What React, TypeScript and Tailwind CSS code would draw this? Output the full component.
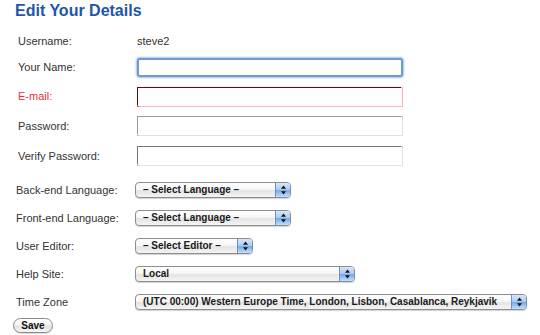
import React from "react";

function Arrows() {
  return (
    <svg width="7" height="10" viewBox="0 0 7 10">
      <path d="M3.5 0.5 L6 3.8 L1 3.8 Z" fill="#111" />
      <path d="M3.5 9.5 L6 6.2 L1 6.2 Z" fill="#111" />
    </svg>
  );
}

function AquaSelect({ text, className }: { text: string; className: string }) {
  return (
    <div
      className={
        "flex h-[16px] items-stretch rounded-[4px] border border-[#8d8d8d] bg-[linear-gradient(#ffffff,#f6f6f6_45%,#e4e4e4_55%,#f4f4f4)] shadow-[0_1px_1px_rgba(0,0,0,0.18)] " +
        className
      }
    >
      <div className="flex-1 overflow-hidden whitespace-nowrap pl-[7px] text-[10px] font-bold leading-[14px] text-[#1a1a1a]">
        {text}
      </div>
      <div className="flex w-[15px] items-center justify-center rounded-r-[3px] border-l border-[#6d8fc2] bg-[linear-gradient(#d6e7fb,#a9cbf2_48%,#74a8ea_52%,#c3defb)]">
        <Arrows />
      </div>
    </div>
  );
}

function Label({ children, red, narrow }: { children: React.ReactNode; red?: boolean; narrow?: boolean }) {
  return (
    <div
      className={
        (narrow ? "w-[120px] pl-[1px] " : "w-[122px] pl-[3px] ") +
        "text-[11px] leading-[13px] " +
        (red ? "text-[#e8323a]" : "text-[#333]")
      }
    >
      {children}
    </div>
  );
}

export default function App() {
  return (
    <div className="h-[335px] w-[540px] overflow-hidden bg-white font-['Liberation_Sans',Arial,sans-serif] text-[#333]">
      <div className="pl-[15px]">
        <h1 className="h-[28px] pt-[1px] text-[16px] font-bold leading-[20px] text-[#1f55ab]">Edit Your Details</h1>

        <div className="flex h-[26px] items-center">
          <Label>Username:</Label>
          <div className="text-[11px] leading-[13px] text-[#333]">steve2</div>
        </div>

        <div className="flex h-[26px] items-center">
          <Label>Your Name:</Label>
          <div className="h-[19px] w-[266px] rounded-[3px] border-2 border-[#6e9ad4] bg-white shadow-[0_0_2px_1px_rgba(130,170,225,0.7)]" />
        </div>

        <div className="flex h-[32px] items-center">
          <Label red>E-mail:</Label>
          <div className="ml-[1px] mt-[1px] h-[18px] w-[264px] bg-white shadow-[-1px_-1px_0_0_#7a0000,1px_1px_0_0_#ffb0b0,1px_-1px_0_0_#ffb0b0,-1px_1px_0_0_#c86060]" />
        </div>

        <div className="flex h-[28px] items-center">
          <Label>Password:</Label>
          <div className="ml-[1px] h-[18px] w-[264px] bg-white shadow-[-1px_-1px_0_0_#9a9a9a,1px_1px_0_0_#e2e2e2,1px_-1px_0_0_#c8c8c8,-1px_1px_0_0_#c4c4c4]" />
        </div>

        <div className="flex h-[32px] items-center">
          <Label>Verify Password:</Label>
          <div className="ml-[1px] h-[18px] w-[264px] bg-white shadow-[-1px_-1px_0_0_#777777,1px_1px_0_0_#e2e2e2,1px_-1px_0_0_#c8c8c8,-1px_1px_0_0_#c4c4c4]" />
        </div>

        <div className="h-[4px]" />

        <div className="flex h-[28px] items-center">
          <Label narrow>Back-end Language:</Label>
          <AquaSelect text="– Select Language –" className="w-[156px]" />
        </div>

        <div className="flex h-[28px] items-center">
          <Label narrow>Front-end Language:</Label>
          <AquaSelect text="– Select Language –" className="w-[156px]" />
        </div>

        <div className="flex h-[28px] items-center">
          <Label narrow>User Editor:</Label>
          <AquaSelect text="– Select Editor –" className="w-[118px]" />
        </div>

        <div className="flex h-[28px] items-center">
          <Label narrow>Help Site:</Label>
          <AquaSelect text="Local" className="w-[220px]" />
        </div>

        <div className="flex h-[28px] items-center">
          <Label narrow>Time Zone</Label>
          <AquaSelect
            text="(UTC 00:00) Western Europe Time, London, Lisbon, Casablanca, Reykjavik"
            className="w-[392px]"
          />
        </div>

        <div className="ml-[-2px] mt-[2px] flex h-[15px] w-[40px] items-center justify-center rounded-full border border-[#8a8a8a] bg-[linear-gradient(#ffffff,#f4f4f4_45%,#e2e2e2_55%,#f6f6f6)] shadow-[0_1px_1px_rgba(0,0,0,0.15)] text-[10px] font-bold leading-[12px] text-[#111]">
          Save
        </div>
      </div>
    </div>
  );
}
